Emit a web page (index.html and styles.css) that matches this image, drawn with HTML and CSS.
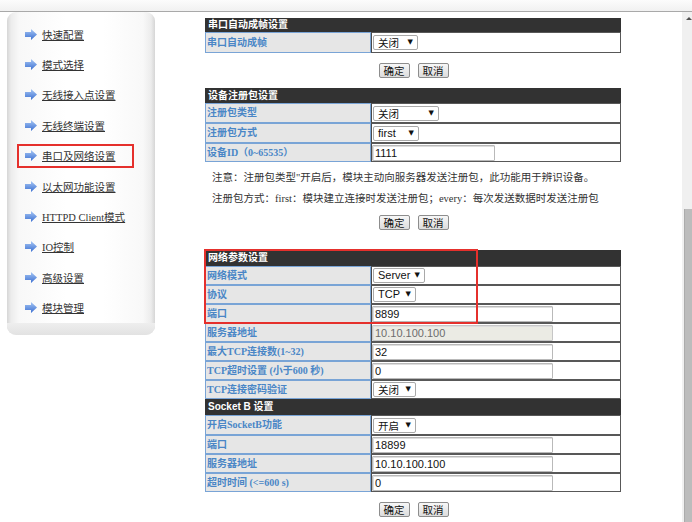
FILE: index.html
```html
<!DOCTYPE html>
<html lang="zh-CN">
<head>
<meta charset="utf-8">
<title>串口及网络设置</title>
<link rel="stylesheet" href="styles.css">
</head>
<body>
<div class="topbar"></div>
<div class="main">
  <nav class="side">
    <ul class="menu">
      <li><a href="#"><svg class="ico" width="12" height="11" viewBox="0 0 12 11"><defs><linearGradient id="g1" x1="0" y1="0" x2="0" y2="1"><stop offset="0" stop-color="#a6c6f4"/><stop offset="1" stop-color="#3c70d2"/></linearGradient></defs><polygon points="0,3 6,3 6,0 12,5.5 6,11 6,8 0,8" fill="url(#g1)"/></svg><span>快速配置</span></a></li>
      <li><a href="#"><svg class="ico" width="12" height="11" viewBox="0 0 12 11"><defs><linearGradient id="g2" x1="0" y1="0" x2="0" y2="1"><stop offset="0" stop-color="#a6c6f4"/><stop offset="1" stop-color="#3c70d2"/></linearGradient></defs><polygon points="0,3 6,3 6,0 12,5.5 6,11 6,8 0,8" fill="url(#g2)"/></svg><span>模式选择</span></a></li>
      <li><a href="#"><svg class="ico" width="12" height="11" viewBox="0 0 12 11"><defs><linearGradient id="g3" x1="0" y1="0" x2="0" y2="1"><stop offset="0" stop-color="#a6c6f4"/><stop offset="1" stop-color="#3c70d2"/></linearGradient></defs><polygon points="0,3 6,3 6,0 12,5.5 6,11 6,8 0,8" fill="url(#g3)"/></svg><span>无线接入点设置</span></a></li>
      <li><a href="#"><svg class="ico" width="12" height="11" viewBox="0 0 12 11"><defs><linearGradient id="g4" x1="0" y1="0" x2="0" y2="1"><stop offset="0" stop-color="#a6c6f4"/><stop offset="1" stop-color="#3c70d2"/></linearGradient></defs><polygon points="0,3 6,3 6,0 12,5.5 6,11 6,8 0,8" fill="url(#g4)"/></svg><span>无线终端设置</span></a></li>
      <li><a href="#" class="hl"><svg class="ico" width="12" height="11" viewBox="0 0 12 11"><defs><linearGradient id="g5" x1="0" y1="0" x2="0" y2="1"><stop offset="0" stop-color="#a6c6f4"/><stop offset="1" stop-color="#3c70d2"/></linearGradient></defs><polygon points="0,3 6,3 6,0 12,5.5 6,11 6,8 0,8" fill="url(#g5)"/></svg><span>串口及网络设置</span></a></li>
      <li><a href="#"><svg class="ico" width="12" height="11" viewBox="0 0 12 11"><defs><linearGradient id="g6" x1="0" y1="0" x2="0" y2="1"><stop offset="0" stop-color="#a6c6f4"/><stop offset="1" stop-color="#3c70d2"/></linearGradient></defs><polygon points="0,3 6,3 6,0 12,5.5 6,11 6,8 0,8" fill="url(#g6)"/></svg><span>以太网功能设置</span></a></li>
      <li><a href="#"><svg class="ico" width="12" height="11" viewBox="0 0 12 11"><defs><linearGradient id="g7" x1="0" y1="0" x2="0" y2="1"><stop offset="0" stop-color="#a6c6f4"/><stop offset="1" stop-color="#3c70d2"/></linearGradient></defs><polygon points="0,3 6,3 6,0 12,5.5 6,11 6,8 0,8" fill="url(#g7)"/></svg><span>HTTPD Client模式</span></a></li>
      <li><a href="#"><svg class="ico" width="12" height="11" viewBox="0 0 12 11"><defs><linearGradient id="g8" x1="0" y1="0" x2="0" y2="1"><stop offset="0" stop-color="#a6c6f4"/><stop offset="1" stop-color="#3c70d2"/></linearGradient></defs><polygon points="0,3 6,3 6,0 12,5.5 6,11 6,8 0,8" fill="url(#g8)"/></svg><span>IO控制</span></a></li>
      <li><a href="#"><svg class="ico" width="12" height="11" viewBox="0 0 12 11"><defs><linearGradient id="g9" x1="0" y1="0" x2="0" y2="1"><stop offset="0" stop-color="#a6c6f4"/><stop offset="1" stop-color="#3c70d2"/></linearGradient></defs><polygon points="0,3 6,3 6,0 12,5.5 6,11 6,8 0,8" fill="url(#g9)"/></svg><span>高级设置</span></a></li>
      <li><a href="#"><svg class="ico" width="12" height="11" viewBox="0 0 12 11"><defs><linearGradient id="g10" x1="0" y1="0" x2="0" y2="1"><stop offset="0" stop-color="#a6c6f4"/><stop offset="1" stop-color="#3c70d2"/></linearGradient></defs><polygon points="0,3 6,3 6,0 12,5.5 6,11 6,8 0,8" fill="url(#g10)"/></svg><span>模块管理</span></a></li>
    </ul>
    <div class="side-foot"></div>
  </nav>

  <div class="content">
    <table class="tbl t1">
      <colgroup><col class="c1"><col class="c2"></colgroup>
      <tr class="hd h14"><th colspan="2">串口自动成帧设置</th></tr>
      <tr class="r21"><td class="lab">串口自动成帧</td><td class="val"><span class="sel w45">关闭</span></td></tr>
    </table>
    <div class="btns"><button>确定</button><button>取消</button></div>

    <table class="tbl t2">
      <colgroup><col class="c1"><col class="c2"></colgroup>
      <tr class="hd h15"><th colspan="2">设备注册包设置</th></tr>
      <tr class="r20"><td class="lab">注册包类型</td><td class="val"><span class="sel w66">关闭</span></td></tr>
      <tr class="r20"><td class="lab">注册包方式</td><td class="val"><span class="sel w46 lat">first</span></td></tr>
      <tr class="r19"><td class="lab">设备ID（0~65535）</td><td class="val"><input class="inp short" type="text" value="1111"></td></tr>
    </table>
    <div class="notes">
      <p>注意：注册包类型"开启后，模块主动向服务器发送注册包，此功能用于辨识设备。</p>
      <p>注册包方式：first：模块建立连接时发送注册包；every：每次发送数据时发送注册包</p>
    </div>
    <div class="btns b2"><button>确定</button><button>取消</button></div>

    <div class="net">
      <table class="tbl t3">
        <colgroup><col class="c1"><col class="c2"></colgroup>
        <tr class="hd h16"><th colspan="2">网络参数设置</th></tr>
        <tr class="r19"><td class="lab">网络模式</td><td class="val"><span class="sel w52 lat">Server</span></td></tr>
        <tr class="r19"><td class="lab">协议</td><td class="val"><span class="sel w43 lat">TCP</span></td></tr>
        <tr class="r19"><td class="lab">端口</td><td class="val"><input class="inp" type="text" value="8899"></td></tr>
        <tr class="r19"><td class="lab">服务器地址</td><td class="val"><input class="inp dis" type="text" value="10.10.100.100" disabled></td></tr>
        <tr class="r19"><td class="lab">最大TCP连接数(1~32)</td><td class="val"><input class="inp" type="text" value="32"></td></tr>
        <tr class="r19"><td class="lab">TCP超时设置 (小于600 秒)</td><td class="val"><input class="inp" type="text" value="0"></td></tr>
        <tr class="r19"><td class="lab">TCP连接密码验证</td><td class="val"><span class="sel w43">关闭</span></td></tr>
        <tr class="hd h16"><th colspan="2" class="sans">Socket B 设置</th></tr>
        <tr class="r20"><td class="lab">开启SocketB功能</td><td class="val"><span class="sel w43">开启</span></td></tr>
        <tr class="r19"><td class="lab">端口</td><td class="val"><input class="inp" type="text" value="18899"></td></tr>
        <tr class="r19"><td class="lab">服务器地址</td><td class="val"><input class="inp" type="text" value="10.10.100.100"></td></tr>
        <tr class="r19"><td class="lab">超时时间 (&lt;=600 s)</td><td class="val"><input class="inp" type="text" value="0"></td></tr>
      </table>
      <div class="redbox"></div>
    </div>
    <div class="btns b3"><button>确定</button><button>取消</button></div>
  </div>

  <div class="scroll">
    <div class="track"><span class="up"></span></div>
    <div class="thumb"></div>
  </div>
</div>
</body>
</html>
```

FILE: styles.css
```css
html, body {
  margin: 0;
  padding: 0;
}
body {
  width: 692px;
  height: 522px;
  overflow: hidden;
  background: #fff;
  font-family: "Liberation Serif", "Noto Sans CJK SC", serif;
  color: #333;
}

.topbar {
  height: 11px;
  background: linear-gradient(#fcfcfc, #f1f1f1);
  border-bottom: 1px solid #a9a9a9;
}

.main {
  display: flex;
  height: 510px;
}

/* ---------- sidebar ---------- */
.side {
  margin-left: 7px;
  width: 148px;
  height: 323px;
  display: flex;
  flex-direction: column;
  border-radius: 9px;
  overflow: hidden;
  background: linear-gradient(to right, #d6d6d6 0, #ececec 4px, #f8f8f8 12px, #ffffff 40%, #ffffff 65%, #f8f8f8 calc(100% - 12px), #ececec calc(100% - 4px), #d6d6d6 100%);
}
.menu {
  list-style: none;
  margin: 0;
  padding: 7px 0 0 18px;
  flex: 1;
}
.menu li {
  height: 30.4px;
  display: flex;
  align-items: center;
}
.menu a {
  display: flex;
  align-items: center;
  gap: 5px;
  color: #333;
  font-size: 10.5px;
  text-decoration: none;
}
.menu a span {
  text-decoration: underline;
}
.menu .ico {
  flex: none;
}
.menu a.hl {
  border: 2px solid #e5302c;
  margin-left: -8px;
  padding: 0 16px 0 6px;
  height: 20px;
}
.side-foot {
  height: 15px;
  background: linear-gradient(#eeeeee, #e2e2e2);
}

/* ---------- content ---------- */
.content {
  margin-left: 50px;
  width: 416px;
  padding-top: 6px;
}

.tbl {
  width: 416px;
  border-collapse: separate;
  border-spacing: 0;
  table-layout: fixed;
  font-size: 10px;
}
.tbl .c1 { width: 166px; }
.tbl .c2 { width: 250px; }
.tbl th {
  background: #323232;
  color: #fff;
  font-weight: bold;
  text-align: left;
  padding: 0 0 0 2px;
  border: 1px solid #323232;
  line-height: 12px;
}
.tbl th.sans {
  font-family: "Liberation Sans", "Noto Sans CJK SC", sans-serif;
}
.tbl .h14 { height: 14px; }
.tbl .h15 { height: 15px; }
.tbl .h16 { height: 16px; }
.tbl .r19 { height: 19px; }
.tbl .r20 { height: 20px; }
.tbl .r21 { height: 21px; }
.tbl td {
  padding: 0;
  line-height: 12px;
  vertical-align: middle;
}
.tbl .lab {
  background: #e6e6e6;
  border: 1px solid #79a4d6;
  color: #4a86c6;
  font-weight: bold;
  padding-left: 1px;
  white-space: nowrap;
  overflow: hidden;
}
.tbl .val {
  background: #fff;
  border: 1px solid #585858;
  border-left-color: #4a4a4a;
}

.sel {
  display: inline-flex;
  align-items: center;
  justify-content: space-between;
  box-sizing: border-box;
  height: 15px;
  margin-left: 1px;
  padding: 0 4px 0 4px;
  border: 1px solid #a9a9a9;
  border-radius: 2px;
  background: #fff;
  color: #111;
  font-family: "Noto Sans CJK SC", sans-serif;
  font-size: 10.5px;
  line-height: 13px;
  vertical-align: middle;
}
.sel.lat {
  font-family: "Liberation Sans", "Noto Sans CJK SC", sans-serif;
  font-size: 11px;
}
.sel::after {
  content: "▼";
  font-family: "DejaVu Sans", sans-serif;
  font-size: 7px;
  color: #111;
}
.w43 { width: 43px; }
.w45 { width: 45px; }
.w46 { width: 46px; }
.w52 { width: 52px; }
.w66 { width: 66px; }

.inp {
  display: block;
  box-sizing: border-box;
  width: 181px;
  height: 16px;
  margin: 0;
  padding: 0 2px;
  border: 1px solid #b9b9b9;
  box-shadow: inset 1px 1px 0 #dedede;
  border-radius: 1px;
  background: #fff;
  color: #111;
  font-family: "Liberation Sans", sans-serif;
  font-size: 11px;
  outline: none;
}
.inp.short { width: 123px; }
.inp.dis {
  background: #ebebe4;
  color: #6d6d6d;
  border-color: #c6c6c6;
}

.btns {
  display: flex;
  justify-content: center;
  gap: 8px;
  margin: 10px 0 10px 1px;
}
.btns button {
  width: 31px;
  height: 15px;
  padding: 0;
  border: 1px solid #8d8d8d;
  border-radius: 2px;
  background: linear-gradient(#f7f7f7, #dcdcdc);
  color: #111;
  font-family: "Noto Sans CJK SC", sans-serif;
  font-size: 10.5px;
  line-height: 13px;
}
.btns.b2 { margin-top: 6px; margin-bottom: 20px; }
.btns.b3 { margin-top: 10px; }

.notes {
  margin-top: 5px;
  padding-left: 7px;
  font-size: 10.5px;
  line-height: 21px;
  color: #333;
}
.notes p { margin: 0; white-space: nowrap; }

.net {
  position: relative;
}
.redbox {
  position: absolute;
  left: -1px;
  top: -1px;
  width: 270px;
  height: 71px;
  border: 2px solid #e5302c;
  pointer-events: none;
}

/* ---------- scrollbar ---------- */
.scroll {
  margin-left: auto;
  width: 10px;
  display: flex;
  flex-direction: column;
  background: #f0f0f0;
}
.track {
  height: 197px;
  position: relative;
}
.up {
  position: absolute;
  left: 4px;
  top: 5px;
  width: 0;
  height: 0;
  border-left: 3px solid transparent;
  border-right: 3px solid transparent;
  border-bottom: 3px solid #505050;
}
.thumb {
  flex: 1;
  margin-left: 2px;
  background: #bcbcbc;
  border-left: 1px solid #ababab;
}
```
